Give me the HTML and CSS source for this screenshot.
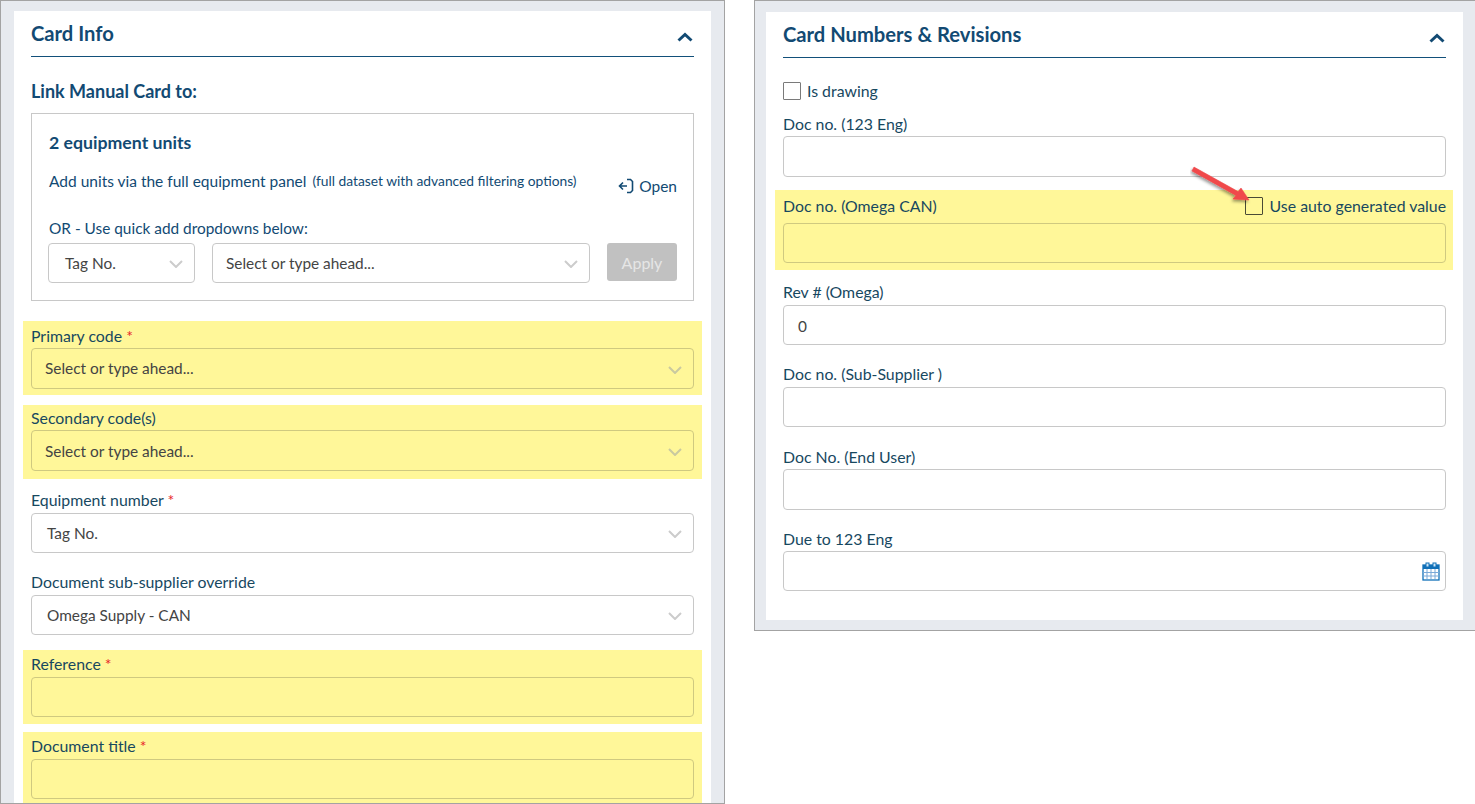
FILE: index.html
```html
<!DOCTYPE html>
<html lang="en">
<head>
<meta charset="utf-8">
<title>Card Info</title>
<link rel="stylesheet" href="styles.css">
</head>
<body>
<main class="page">
  <section class="window window-left">
    <div class="card card-left">
      <header class="card-head">
        <h2>Card Info</h2>
        <svg class="collapse" width="16" height="10" viewBox="0 0 16 10"><path d="M1.500 8.500 8 2.500l6.500 6" fill="none" stroke="#124a73" stroke-width="3"/></svg>
      </header>
      <h3 class="link-title">Link Manual Card to:</h3>
      <div class="link-box">
        <div class="units">2 equipment units</div>
        <div class="add-row">
          <span class="add-text">Add units via the full equipment panel</span>
          <span class="add-note">(full dataset with advanced filtering options)</span>
          <span class="open">
            <svg width="16" height="16" viewBox="0 0 16 16"><path d="M9 1.500h3.500l2 2v9l-2 2H9M9 8H1.500M5 4.500 1.500 8 5 11.500" fill="none" stroke="#124a73" stroke-width="1.600"/></svg>
            Open
          </span>
        </div>
        <div class="or-text">OR - Use quick add dropdowns below:</div>
        <div class="quick-row">
          <div class="control select tag">Tag No.<svg class="chev" width="14" height="8" viewBox="0 0 14 8"><path d="m1 1 6 6 6-6" fill="none" stroke="#ccc" stroke-width="2"/></svg></div>
          <div class="control select ahead">Select or type ahead...<svg class="chev" width="14" height="8" viewBox="0 0 14 8"><path d="m1 1 6 6 6-6" fill="none" stroke="#ccc" stroke-width="2"/></svg></div>
          <button class="apply" type="button">Apply</button>
        </div>
      </div>

      <div class="field hl primary">
        <label>Primary code <i>*</i></label>
        <div class="control select tall lift">Select or type ahead...<svg class="chev" width="14" height="8" viewBox="0 0 14 8"><path d="m1 1 6 6 6-6" fill="none" stroke="#c9c9a0" stroke-width="2"/></svg></div>
      </div>
      <div class="field hl secondary">
        <label>Secondary code(s)</label>
        <div class="control select tall">Select or type ahead...<svg class="chev" width="14" height="8" viewBox="0 0 14 8"><path d="m1 1 6 6 6-6" fill="none" stroke="#c9c9a0" stroke-width="2"/></svg></div>
      </div>
      <div class="field equip">
        <label>Equipment number <i>*</i></label>
        <div class="control select shift">Tag No.<svg class="chev" width="14" height="8" viewBox="0 0 14 8"><path d="m1 1 6 6 6-6" fill="none" stroke="#ccc" stroke-width="2"/></svg></div>
      </div>
      <div class="field override">
        <label>Document sub-supplier override</label>
        <div class="control select shift">Omega Supply - CAN<svg class="chev" width="14" height="8" viewBox="0 0 14 8"><path d="m1 1 6 6 6-6" fill="none" stroke="#ccc" stroke-width="2"/></svg></div>
      </div>
      <div class="field hl reference">
        <label>Reference <i>*</i></label>
        <div class="control"></div>
      </div>
      <div class="field hl doctitle">
        <label>Document title <i>*</i></label>
        <div class="control"></div>
      </div>
    </div>
  </section>

  <section class="window window-right">
    <div class="card card-right">
      <header class="card-head">
        <h2>Card Numbers &amp; Revisions</h2>
        <svg class="collapse" width="16" height="10" viewBox="0 0 16 10"><path d="M1.500 8.500 8 2.500l6.500 6" fill="none" stroke="#124a73" stroke-width="3"/></svg>
      </header>
      <div class="check-row">
        <span class="check"></span>
        <span class="check-label">Is drawing</span>
      </div>
      <div class="field doc123">
        <label>Doc no. (123 Eng)</label>
        <div class="control tall"></div>
      </div>
      <div class="field hl omega">
        <div class="label-row">
          <label>Doc no. (Omega CAN)</label>
          <span class="auto"><span class="check dark"></span><span class="auto-text">Use auto generated value</span></span>
        </div>
        <div class="control"></div>
      </div>
      <div class="field rev">
        <label>Rev # (Omega)</label>
        <div class="control value">0</div>
      </div>
      <div class="field sub">
        <label>Doc no. (Sub-Supplier )</label>
        <div class="control"></div>
      </div>
      <div class="field end">
        <label>Doc No. (End User)</label>
        <div class="control tall"></div>
      </div>
      <div class="field due">
        <label>Due to 123 Eng</label>
        <div class="control date">
          <svg width="18" height="19" viewBox="0 0 18 19">
            <rect x="1" y="3" width="16" height="15" fill="#fff" stroke="#1070b8" stroke-width="1.300"/>
            <rect x="1" y="3" width="16" height="4" fill="#1070b8"/>
            <rect x="4" y="1" width="3" height="4" fill="#cfe6f7" stroke="#1070b8"/>
            <rect x="11" y="1" width="3" height="4" fill="#cfe6f7" stroke="#1070b8"/>
            <path d="M5 7v10M9 7v10M13 7v10M1 10.500h16M1 14h16" stroke="#7aa9d8" stroke-width="1"/>
          </svg>
        </div>
      </div>
    </div>
    <svg class="arrow" width="70" height="44" viewBox="0 0 70 44">
      <defs><filter id="sh" x="-20%" y="-30%" width="150%" height="170%"><feDropShadow dx="-1" dy="2" stdDeviation="1.500" flood-color="#000" flood-opacity=".4"/></filter></defs>
      <path d="M4 1.100 48.100 25.600 51 22l8 12-16-1 2.900-3.600L1.900 4.900Z" fill="#f04a4c" stroke="#f04a4c" stroke-width=".6" stroke-linejoin="round" filter="url(#sh)"/>
    </svg>
  </section>
</main>
</body>
</html>
```

FILE: styles.css
```css
* { box-sizing: border-box; }
html, body { margin: 0; padding: 0; background: #fff; }
body { width: 1475px; height: 804px; overflow: hidden; font-family: Lato, "Liberation Sans", sans-serif; font-size: 15.400px; color: #17485f; }
.page { display: flex; gap: 29px; align-items: flex-start; height: 804px; }
.window { position: relative; border: 1px solid #a3a3a3; background: #e7eaef; }
.window-left { width: 725px; height: 804px; overflow: hidden; padding: 10px 13px 0 13px; }
.window-right { width: 721px; height: 631px; padding: 11px 12px 10px 11px; border-right: 0; }
.card { background: #fff; padding: 0 17px; }
.card-left { height: 900px; }
.card-right { height: 608px; }
.card-head { display: flex; justify-content: space-between; align-items: center; height: 46px; border-bottom: 1px solid #12507a; }
.card-head h2 { margin: -2px 0 0; font-size: 20.200px; font-weight: 700; color: #124a73; line-height: 44px; }
.collapse { margin-top: 7px; margin-right: 1px; }
.link-title { margin: 23px 0 11px; font-size: 18px; line-height: 22px; font-weight: 700; color: #124a73; }
.link-box { height: 188px; border: 1px solid #c8c8c8; padding: 17px 16px 0 17px; }
.units { font-size: 17.700px; font-weight: 700; color: #124a73; line-height: 24px; }
.add-row { display: flex; align-items: flex-start; margin-top: 16px; height: 24px; color: #124a73; }
.add-text { font-size: 15.500px; line-height: 20px; }
.add-note { font-size: 13.800px; line-height: 20px; margin-left: 6px; }
.open { display: flex; align-items: center; gap: 5px; margin-left: auto; margin-top: 5px; font-size: 15.500px; line-height: 20px; }
.or-text { margin-top: 23px; line-height: 20px; color: #124a73; }
.quick-row { display: flex; margin-top: 5px; margin-left: -1px; height: 40px; }
.control { position: relative; display: flex; align-items: center; height: 40px; border: 1px solid #c8c8c8; border-radius: 4px; background: #fff; color: #444; }
.hl .control { background: #fff799; border-color: #cfc980; }
.select { padding-left: 13px; }
.shift { padding-left: 15px; }
.lift { padding-bottom: 2px; }
.chev { position: absolute; right: 11px; top: 50%; margin-top: -3px; }
.tag { width: 147px; padding-left: 16px; }
.ahead { width: 378px; margin-left: 17px; }
.apply { width: 70px; height: 38px; margin-left: 17px; border: 0; border-radius: 3px; background: #c1c1c1; color: #e6e6e6; font: inherit; font-size: 16px; padding: 0; }
.field label { display: block; font-size: 15.850px; line-height: 20px; color: #17485f; }
.field label i { color: #e8262a; font-style: normal; }
.hl { margin-left: -8px; margin-right: -8px; padding: 0 8px; background: #fff799; }
.primary { margin-top: 20px; height: 74px; padding-top: 5px; }
.primary label, .secondary label { margin-bottom: 2px; }
.tall { height: 41px; }
.secondary { margin-top: 10px; height: 74px; padding-top: 3px; }
.equip { margin-top: 11px; }
.equip label, .override label { margin-bottom: 3px; }
.override { margin-top: 19px; }
.reference { margin-top: 15px; height: 74px; padding-top: 4px; }
.reference label, .doctitle label { margin-bottom: 3px; }
.doctitle { margin-top: 8px; height: 90px; padding-top: 4px; }
.check-row { display: flex; align-items: center; gap: 6px; margin-top: 23px; height: 20px; }
.check { display: block; width: 18px; height: 18px; border: 1px solid #7a7a7a; background: #fff; border-radius: 1px; }
.check.dark { border-color: #4a4a35; background: transparent; }
.check-label { font-size: 15.850px; padding-bottom: 2px; }
.doc123 { margin-top: 13px; }
.doc123 label { margin-bottom: 2px; }
.omega { margin-top: 13px; margin-right: -7px; height: 80px; padding: 6px 7px 0 8px; }
.label-row { display: flex; justify-content: space-between; align-items: center; height: 20px; margin-bottom: 7px; }
.auto { display: flex; align-items: center; gap: 7px; }
.auto-text { font-size: 15.850px; padding-bottom: 2px; }
.rev { margin-top: 12px; }
.rev label, .sub label { margin-bottom: 3px; }
.due label { margin-bottom: 2px; }
.end label { margin-bottom: 2px; }
.value { padding-left: 14px; padding-top: 2px; }
.sub { margin-top: 19px; }
.end { margin-top: 20px; }
.due { margin-top: 19px; }
.date { justify-content: flex-end; padding-right: 5px; }
.arrow { position: absolute; left: 435px; top: 165px; }
```
